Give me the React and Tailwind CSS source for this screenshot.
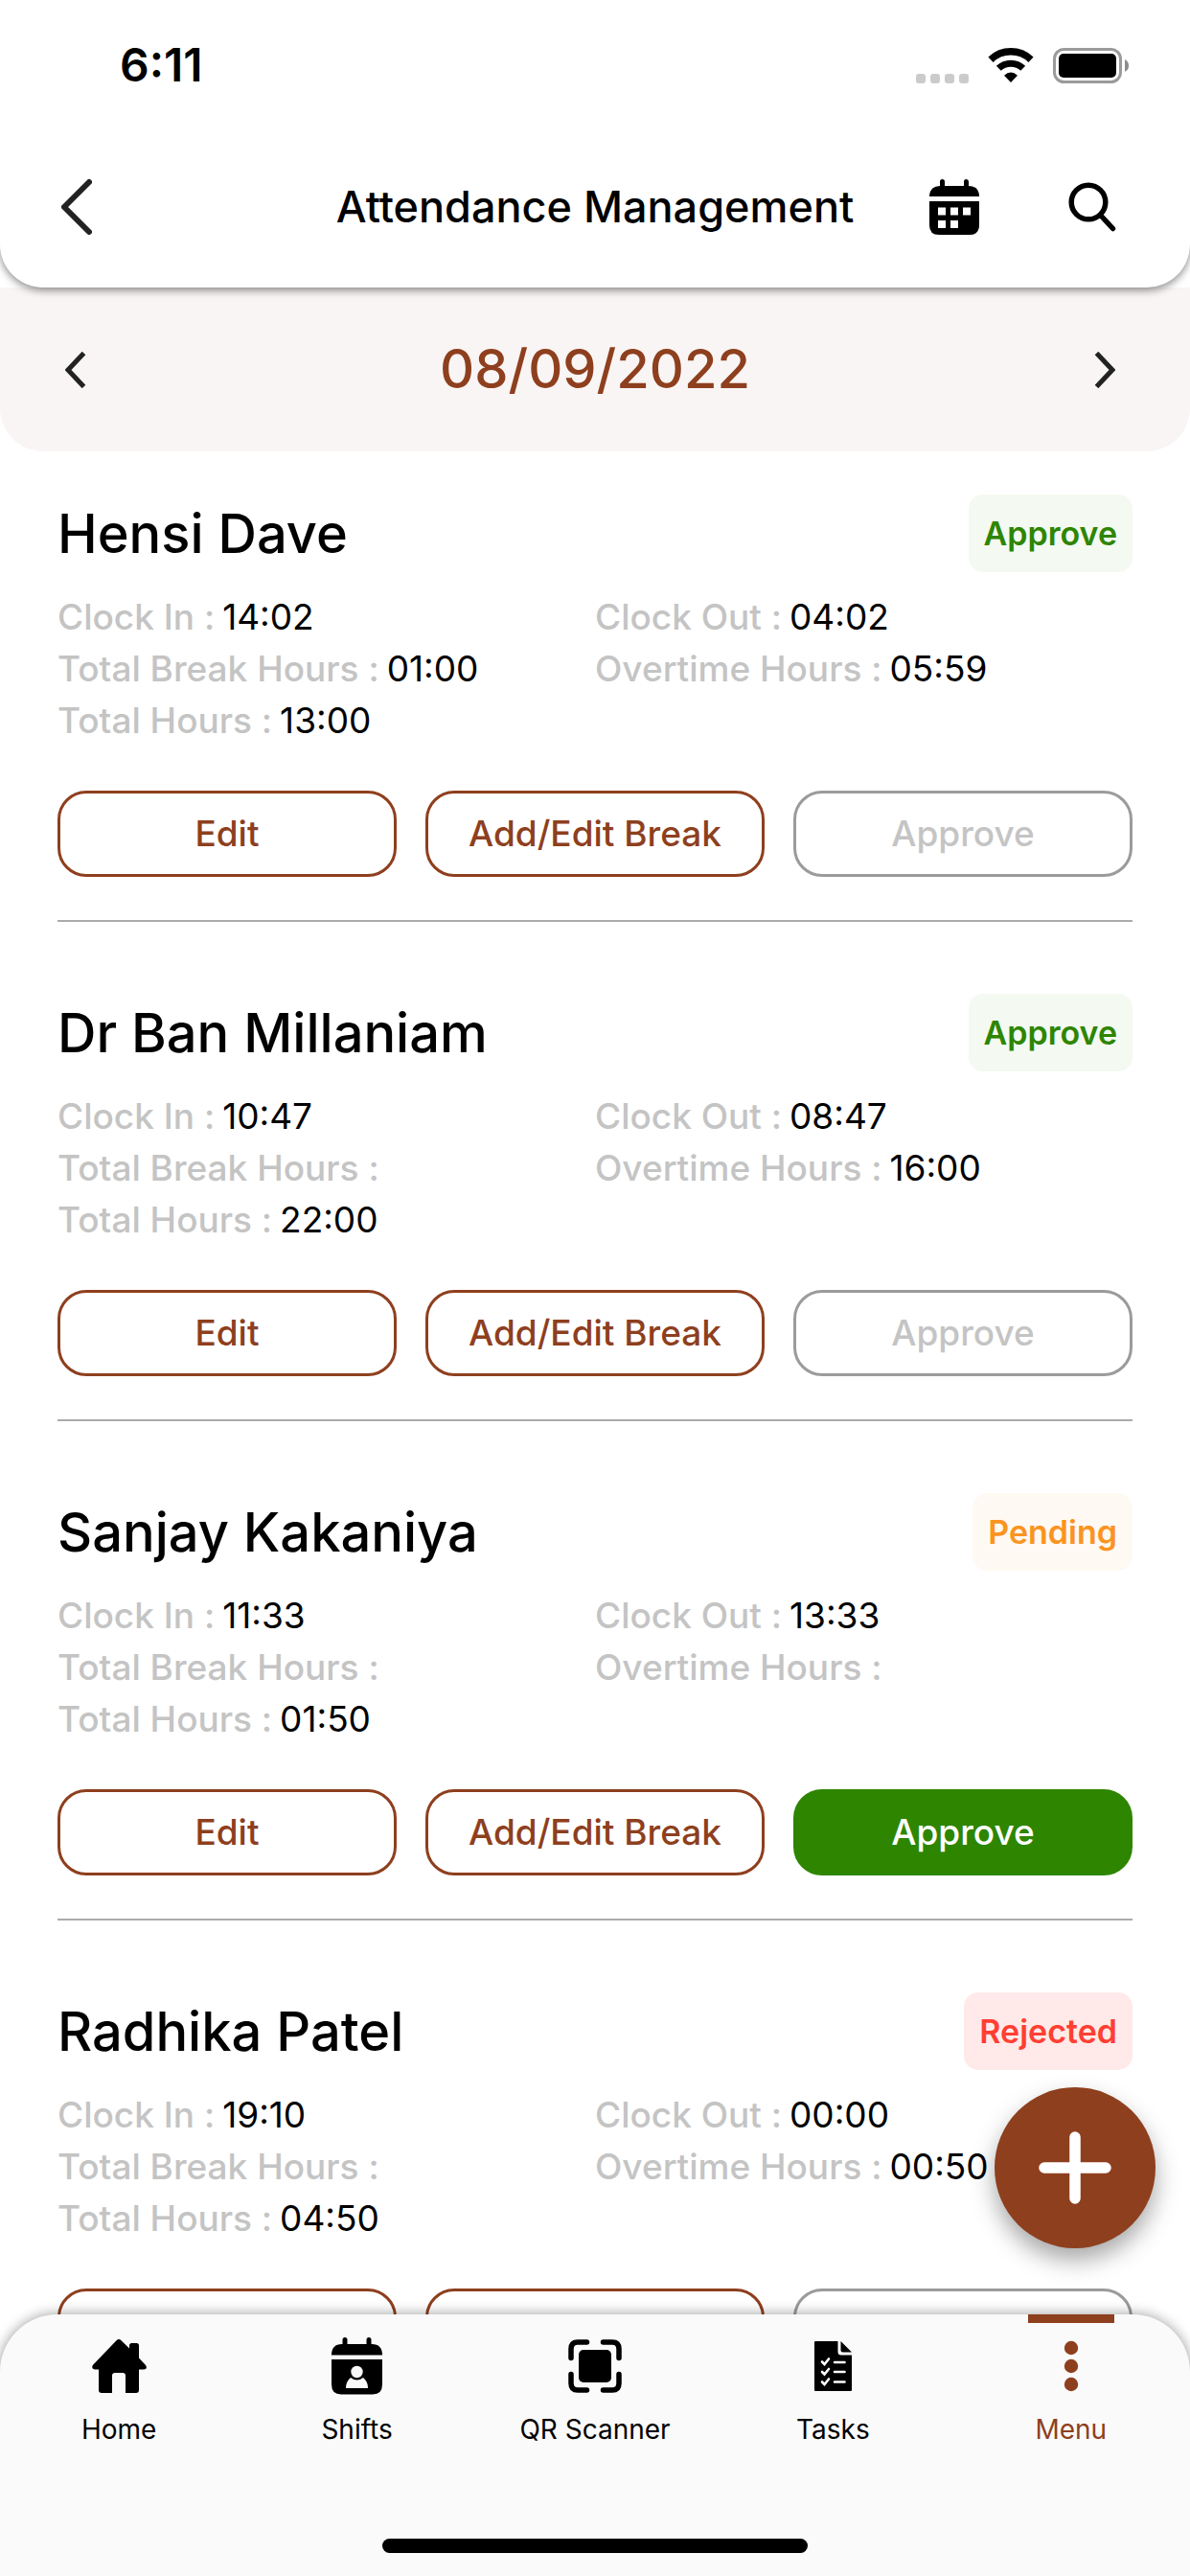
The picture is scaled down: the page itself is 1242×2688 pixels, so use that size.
import { useState } from 'react';
import clsx from 'clsx';

const records = [
  { name: 'Hensi Dave', status: 'Approve', clockIn: '14:02', clockOut: '04:02', breakHours: '01:00', overtime: '05:59', total: '13:00' },
  { name: 'Dr Ban Millaniam', status: 'Approve', clockIn: '10:47', clockOut: '08:47', breakHours: '', overtime: '16:00', total: '22:00' },
  { name: 'Sanjay Kakaniya', status: 'Pending', clockIn: '11:33', clockOut: '13:33', breakHours: '', overtime: '', total: '01:50' },
  { name: 'Radhika Patel', status: 'Rejected', clockIn: '19:10', clockOut: '00:00', breakHours: '', overtime: '00:50', total: '04:50' },
];

const statusStyles = {
  Approve: 'bg-[#f4f9f1] text-[#2e8500]',
  Pending: 'bg-[#fff9f3] text-[#fa9421]',
  Rejected: 'bg-[#ffeae9] text-[#ff3f33]',
};

const Chevron = ({ className, d, viewBox, strokeWidth, round }) => (
  <svg
    className={className}
    viewBox={viewBox}
    fill="none"
    stroke="#222"
    strokeWidth={strokeWidth}
    strokeLinecap={round ? 'round' : 'butt'}
    strokeLinejoin={round ? 'round' : 'miter'}
  >
    <path d={d} />
  </svg>
);

const CalendarIcon = () => (
  <svg className="h-[58px] w-[52px]" viewBox="0 0 52 58">
    <path d="M11 8V2.5a2.5 2.5 0 0 1 5 0V8zM36 8V2.5a2.5 2.5 0 0 1 5 0V8z" />
    <path d="M0 18v-1Q1 7 11 7h30q10 0 11 10v1z" />
    <path d="M0 23h52v25q0 10-10 10H10Q0 58 0 48z" />
    <path fill="#fff" d="M9 29.5h8v8H9zM22 29.5h8v8h-8zM35 29.5h8v8h-8zM9 43h8v8H9zM22 43h8v8h-8z" />
  </svg>
);

const SearchIcon = () => (
  <svg className="h-[52px] w-[50px]" viewBox="0 0 50 52" fill="none" stroke="#000" strokeWidth="5.5" strokeLinecap="round">
    <circle cx="21" cy="21" r="17.8" />
    <path d="M34 35l12.5 13.5" />
  </svg>
);

const HomeIcon = () => (
  <svg className="h-[57px] w-[57px]" viewBox="0 0 57 57">
    <path d="M25.5 1.2Q28-1 30.5 1.2L39 9.5v-3Q39 4 41.500 4h5Q49 4 49 6.500v13l7 7.500q2.500 4-2 4.500h-5V53q0 3-3 3H35V38q0-3-3-3h-8q-3 0-3 3v18H10q-3 0-3-3V31.500H3Q-1 31 .8 27z" />
  </svg>
);

const ShiftsIcon = () => (
  <svg className="h-[60px] w-[53px]" viewBox="0 0 53 60">
    <path d="M11.5 8V2.5a2.5 2.5 0 0 1 5 0V8zM36.5 8V2.5a2.5 2.5 0 0 1 5 0V8z" />
    <path d="M0 18.5Q0 7 11 7h31q11 0 11 11.500z" />
    <path d="M0 23h53v26q0 10.500-10 10.500H10Q0 59.500 0 49z" />
    <circle cx="26.5" cy="36" r="6.2" fill="#fafafa" />
    <path fill="#fafafa" d="M15 53q0-7 5-11 6.500 5 13 0 5 4 5 11z" />
  </svg>
);

const ScannerIcon = () => (
  <svg className="h-[56px] w-[56px]" viewBox="0 0 56 56">
    <rect x="11" y="11" width="34" height="34" rx="5" />
    <path
      fill="none"
      stroke="#000"
      strokeWidth="5.5"
      strokeLinecap="round"
      d="M3 19.5V10q0-7 7-7h9.5M36.5 3H46q7 0 7 7v9.5M53 36.5V46q0 7-7 7h-9.5M19.5 53H10q-7 0-7-7v-9.5"
    />
  </svg>
);

const TasksIcon = () => (
  <svg className="h-[52px] w-[39px]" viewBox="0 0 39 52">
    <path d="M1 0h23.5v11q0 3.500 3.500 3.500h11V51q0 1-1 1H1q-1 0-1-1V1q0-1 1-1z" />
    <path d="M27.5 0L39 11.500h-9.500q-2 0-2-2z" />
    <path
      fill="none"
      stroke="#fafafa"
      strokeWidth="2.6"
      strokeLinecap="round"
      d="M8 21.5l2.5 2.5L15 18.5M8 32l2.5 2.5L15 29M8 42.5l2.5 2.5L15 39.5M21 22h10.5M21 32h10.5M21 42.5h10.5"
    />
  </svg>
);

const MenuIcon = () => (
  <svg className="h-[54px] w-[16px]" viewBox="0 0 16 54" fill="#8e3f1e">
    <circle cx="8" cy="8" r="7.2" />
    <circle cx="8" cy="27" r="7.2" />
    <circle cx="8" cy="46" r="7.2" />
  </svg>
);

const tabs = [
  { label: 'Home', Icon: HomeIcon },
  { label: 'Shifts', Icon: ShiftsIcon },
  { label: 'QR Scanner', Icon: ScannerIcon },
  { label: 'Tasks', Icon: TasksIcon },
  { label: 'Menu', Icon: MenuIcon },
];

const StatusBar = () => (
  <div className="flex items-center justify-between pt-11 pr-16 pl-[125px]">
    <span className="text-[48px] leading-[48px] font-semibold">6:11</span>
    <div className="flex items-center gap-5">
      <svg className="h-[37px] w-[55px]" viewBox="0 0 55 37" fill="#cbcbcb">
        <rect x="0" y="27" width="10" height="10" rx="3" />
        <rect x="15" y="27" width="10" height="10" rx="3" />
        <rect x="30" y="27" width="10" height="10" rx="3" />
        <rect x="45" y="27" width="10" height="10" rx="3" />
      </svg>
      <svg className="h-[37px] w-[48px]" viewBox="0 0 48 37" fill="none" stroke="#000">
        <path strokeWidth="7.5" d="M3 12.2a30.5 30.5 0 0 1 42 0" />
        <path strokeWidth="7" d="M11.3 21.3a18.3 18.3 0 0 1 25.4 0" />
        <path fill="#000" stroke="none" d="M24 36l-7-7.3q7-6.5 14 0z" />
      </svg>
      <svg className="h-[37px] w-[79px]" viewBox="0 0 79 37">
        <rect x="1.5" y="1.5" width="69" height="34" rx="10" fill="none" stroke="#9b9b9b" strokeWidth="3" />
        <rect x="6" y="6" width="60" height="25" rx="5" />
        <path fill="#8c8c8c" d="M75 12q4 2 4 6.5T75 25z" />
      </svg>
    </div>
  </div>
);

const Detail = ({ label, value }) => (
  <div className="flex gap-2">
    <dt className="font-medium text-[#c4c4c4]">{label} :</dt>
    <dd>{value}</dd>
  </div>
);

const RecordCard = ({ record }) => {
  const canApprove = record.status === 'Pending';
  const outlined = 'rounded-[30px] border-3 border-[#8e3f1e] text-[#8e3f1e]';

  return (
    <article className="border-b-2 border-[#ababab] pb-[45px]">
      <div className="flex items-center justify-between">
        <h2 className="text-[56px] leading-[80px] font-medium">{record.name}</h2>
        <span className={clsx('rounded-[15px] px-4 text-[34px] leading-[81px] font-semibold', statusStyles[record.status])}>
          {record.status}
        </span>
      </div>

      <dl className="mt-5 grid grid-cols-2 text-[37px] leading-[54px]">
        <Detail label="Clock In" value={record.clockIn} />
        <Detail label="Clock Out" value={record.clockOut} />
        <Detail label="Total Break Hours" value={record.breakHours} />
        <Detail label="Overtime Hours" value={record.overtime} />
        <Detail label="Total Hours" value={record.total} />
      </dl>

      <div className="mt-[46px] grid grid-cols-3 gap-[30px] text-[37px] leading-[84px] font-medium">
        <button className={outlined}>Edit</button>
        <button className={outlined}>Add/Edit Break</button>
        <button
          disabled={!canApprove}
          className={clsx(
            'rounded-[30px] border-3',
            canApprove ? 'border-[#2e8500] bg-[#2e8500] text-white' : 'border-[#9b9b9b] text-[#c4c4c4]'
          )}
        >
          Approve
        </button>
      </div>
    </article>
  );
};

const App = () => {
  const [activeTab, setActiveTab] = useState('Menu');

  return (
    <div className="flex h-screen flex-col overflow-hidden bg-white font-['Inter',sans-serif] text-black">
      {/* Header */}
      <header className="relative z-10 shrink-0 rounded-b-[45px] bg-white shadow-[0_3px_9px_rgba(0,0,0,0.45)]">
        <StatusBar />
        <div className="mt-10 flex h-[168px] items-center px-[60px]">
          <div className="flex flex-1">
            <button aria-label="Back" className="px-1">
              <Chevron className="h-[60px] w-[32px]" viewBox="0 0 32 60" d="M29 4L3 30l26 26" strokeWidth="6" round />
            </button>
          </div>
          <h1 className="text-[45px] leading-[60px] font-medium">Attendance Management</h1>
          <div className="flex flex-1 justify-end gap-[60px]">
            <button aria-label="Calendar" className="flex w-[84px] items-center justify-center">
              <CalendarIcon />
            </button>
            <button aria-label="Search" className="flex w-[84px] items-center justify-center">
              <SearchIcon />
            </button>
          </div>
        </div>
      </header>

      {/* Date picker */}
      <div className="flex shrink-0 items-center justify-between rounded-b-[45px] bg-[#f9f5f4] px-[60px] py-[50px]">
        <button aria-label="Previous day" className="flex w-12 justify-start pl-2">
          <Chevron className="h-[38px] w-[22px]" viewBox="0 0 22 38" d="M19.5 1.5L3 19l16.5 17.5" strokeWidth="5" />
        </button>
        <span className="text-[56px] leading-[71px] font-medium text-[#8e3f1e]">08/09/2022</span>
        <button aria-label="Next day" className="flex w-12 justify-start pl-2">
          <Chevron className="h-[38px] w-[22px]" viewBox="0 0 22 38" d="M2.5 1.5L19 19 2.5 36.5" strokeWidth="5" />
        </button>
      </div>

      {/* Attendance list */}
      <main className="relative min-h-0 flex-1 overflow-hidden">
        <div className="flex flex-col gap-[75px] px-[60px] pt-[45px]">
          {records.map((record) => (
            <RecordCard key={record.name} record={record} />
          ))}
        </div>
        <button
          aria-label="Add attendance"
          className="absolute right-9 bottom-[69px] flex size-[168px] items-center justify-center rounded-full bg-[#8e3f1e] shadow-[0_12px_24px_rgba(0,0,0,0.35)]"
        >
          <svg className="size-[76px]" viewBox="0 0 76 76" stroke="#fff" strokeWidth="11.5" strokeLinecap="round">
            <path d="M38 6v64M6 38h64" />
          </svg>
        </button>
      </main>

      {/* Bottom tabs */}
      <nav className="relative z-10 shrink-0 rounded-t-[60px] bg-[#fafafa] pb-6 shadow-[0_0_14px_rgba(0,0,0,0.4)]">
        <div className="grid grid-cols-5">
          {tabs.map(({ label, Icon }) => (
            <button
              key={label}
              onClick={() => setActiveTab(label)}
              className={clsx('relative flex flex-col items-center pt-6', label === activeTab && 'text-[#8e3f1e]')}
            >
              {label === activeTab && <span className="absolute top-0 h-[9px] w-[90px] bg-[#8e3f1e]" />}
              <span className="flex h-[60px] items-center">
                <Icon />
              </span>
              <span className="mt-[18px] text-[28px] leading-[36px]">{label}</span>
            </button>
          ))}
        </div>
        <div className="mx-auto mt-24 h-[15px] w-[444px] rounded-full bg-black" />
      </nav>
    </div>
  );
};

export default App;
